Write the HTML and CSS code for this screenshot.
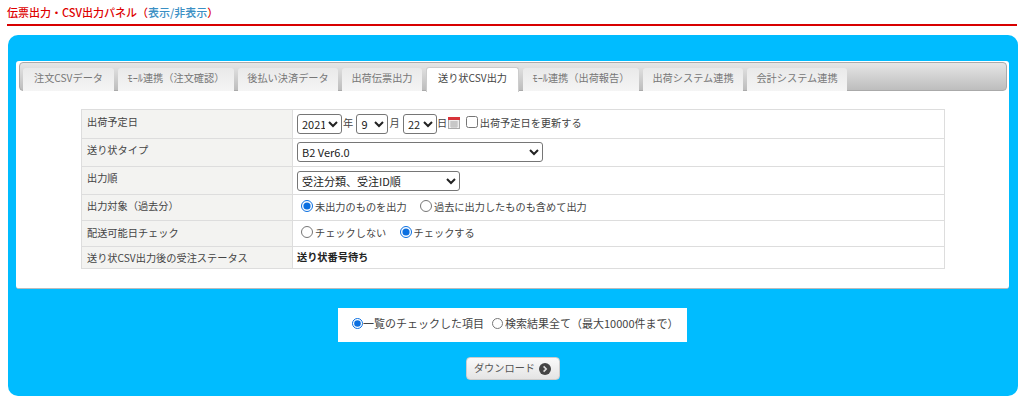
FILE: index.html
```html
<!DOCTYPE html>
<html lang="ja">
<head>
<meta charset="utf-8">
<title>伝票出力・CSV出力パネル</title>
<link rel="stylesheet" href="styles.css">
</head>
<body>
<h2 class="title">伝票出力・CSV出力パネル（<a class="toggle" href="#">表示/非表示</a>）</h2>
<section class="panel">
  <div class="card">
    <ul class="tabs">
      <li class="tab t1">注文CSVデータ</li>
      <li class="tab t2">ﾓｰﾙ連携（注文確認）</li>
      <li class="tab t3">後払い決済データ</li>
      <li class="tab t4">出荷伝票出力</li>
      <li class="tab t5 active">送り状CSV出力</li>
      <li class="tab t6">ﾓｰﾙ連携（出荷報告）</li>
      <li class="tab t7">出荷システム連携</li>
      <li class="tab t8">会計システム連携</li>
    </ul>
    <table class="form">
      <tr class="r1">
        <th>出荷予定日</th>
        <td class="line">
          <select class="sel year"><option>2021</option></select><span class="unit">年</span>
          <select class="sel month"><option>9</option></select><span class="unit">月</span>
          <select class="sel day"><option>22</option></select><span class="unit day-unit">日</span>
          <svg class="cal" width="12" height="12" viewBox="0 0 12 12"><rect x="0.5" y="0.5" width="11" height="11" fill="#eee" stroke="#aaa"/><rect x="0" y="0" width="12" height="3" fill="#d8343a"/><path d="M2 5h8M2 7h8M2 9h8M4 4v7M6 4v7M8 4v7" stroke="#bbb" stroke-width="1"/></svg>
          <label class="opt chk"><input type="checkbox">出荷予定日を更新する</label>
        </td>
      </tr>
      <tr class="r2">
        <th>送り状タイプ</th>
        <td><select class="sel type"><option>B2 Ver6.0</option></select></td>
      </tr>
      <tr class="r3">
        <th>出力順</th>
        <td><select class="sel order"><option>受注分類、受注ID順</option></select></td>
      </tr>
      <tr class="r4">
        <th>出力対象（過去分）</th>
        <td class="line">
          <label class="opt first"><input type="radio" name="a" checked>未出力のものを出力</label>
          <label class="opt"><input type="radio" name="a">過去に出力したものも含めて出力</label>
        </td>
      </tr>
      <tr class="r5">
        <th>配送可能日チェック</th>
        <td class="line">
          <label class="opt"><input type="radio" name="b">チェックしない</label>
          <label class="opt"><input type="radio" name="b" checked>チェックする</label>
        </td>
      </tr>
      <tr class="r6">
        <th>送り状CSV出力後の受注ステータス</th>
        <td><strong>送り状番号待ち</strong></td>
      </tr>
    </table>
  </div>
  <div class="scope">
    <label class="opt"><input type="radio" name="c" checked>一覧のチェックした項目</label>
    <label class="opt"><input type="radio" name="c">検索結果全て（最大10000件まで）</label>
  </div>
  <div class="actions">
    <button class="download" type="button"><span class="download-label">ダウンロード</span>
      <svg width="12" height="12" viewBox="0 0 12 12"><circle cx="6" cy="6" r="6" fill="#444"/><path d="M4.6 3.4 7.2 6 4.6 8.6" fill="none" stroke="#ddd" stroke-width="1.6"/></svg>
    </button>
  </div>
</section>
</body>
</html>
```
FILE: styles.css
```css
* { box-sizing: border-box; }
html, body { margin: 0; padding: 0; background: #fff; }
body {
  height: 403px;
  overflow: hidden;
  font-family: "Noto Sans CJK JP", "Noto Sans", sans-serif;
  font-size: 10.2px;
  color: #333;
}
.title {
  margin: 0 7px 9px;
  height: 26px;
  padding-top: 4px;
  border-bottom: 2px solid #d80000;
  font-size: 11px;
  line-height: 16px;
  font-weight: 500;
  color: #d00;
}
.toggle { color: #3a8fc4; text-decoration: none; }
.panel {
  margin: 0 6px 0 8px;
  height: 361px;
  padding: 26px 9px 0 8px;
  background: #00bcff;
  border-radius: 10px;
}
.card {
  height: 228px;
  background: #fff;
  border-radius: 3px;
  border-bottom: 1px solid #bbb;
  padding: 1px 2px 0 3px;
}
.tabs {
  list-style: none;
  margin: 0;
  height: 29px;
  padding: 5px 0 0 3px;
  display: flex;
  gap: 4px;
  border: 1px solid #aaa;
  border-radius: 4px;
  background: linear-gradient(#e6e6e6, #bdbdbd);
}
.tab {
  height: 23px;
  line-height: 19px;
  text-align: center;
  color: #777;
  background: linear-gradient(#e9e9e9, #f5f5f5);
  border-radius: 3px 3px 0 0;
  white-space: nowrap;
}
.t1 { width: 91px; }
.t2 { width: 116px; }
.t3 { width: 100px; }
.t4 { width: 80px; }
.t5 { width: 93px; }
.t6 { width: 116px; }
.t7 { width: 100px; }
.t8 { width: 100px; }
.tab.active {
  height: 25px;
  margin-top: -1px;
  background: #fff;
  color: #444;
  border: 1px solid #ccc;
  border-bottom: 0;
}
.form {
  width: 864px;
  margin: 18px 0 0 62px;
  border-collapse: collapse;
  table-layout: fixed;
}
.form th, .form td {
  border: 1px solid #ddd;
  padding: 0 4px;
  text-align: left;
  font-weight: 400;
  color: #444;
}
.form th { width: 211px; background: #f3f3f1; padding-left: 5px; }
.form td strong { font-weight: 700; color: #222; }
.r1 { height: 29px; }
.r2, .r3 { height: 28px; }
.r4, .r5 { height: 26px; }
.r6 { height: 22px; }
.r1 th, .r2 th, .r3 th { padding-bottom: 6px; }
.r4 th { padding-bottom: 4px; }
.r5 th { padding-bottom: 2px; }
.r4 td, .r5 td, .r6 td { padding-bottom: 2px; }
.r2 td { padding-bottom: 2px; }
.line { white-space: nowrap; }
.sel {
  height: 20px;
  font: inherit;
  font-size: 11px;
  color: #222;
  background: #fff;
  border: 1px solid #767676;
  border-radius: 3px;
  vertical-align: middle;
  padding: 0;
}
.year { width: 45px; }
.month { width: 32px; }
.day { width: 34px; }
.type { width: 246px; }
.order { width: 163px; }
.unit { margin: 0 1px; }
.day-unit { margin: 0 -1px 0 0; }
.cal { vertical-align: -2px; }
.opt { margin-right: 7px; }
.opt input { margin: 0 2px 0 4px; width: 12px; height: 12px; vertical-align: -1px; accent-color: #0b6fe0; }
.chk input { margin: 0 2px 0 3px; }
.scope {
  width: 349px;
  height: 34px;
  margin: 19px auto 0;
  padding: 0 0 4px 10px;
  background: #fff;
  display: flex;
  align-items: center;
  color: #444;
  font-size: 11px;
}
.scope .opt { margin-right: 4px; }
.scope .opt input { width: 11px; height: 11px; margin-right: 0; }
.scope .opt + .opt input { margin-right: 2px; }
.actions { margin-top: 15px; text-align: center; }
.download {
  width: 94px;
  height: 23px;
  padding: 0;
  font: inherit;
  color: #555;
  background: linear-gradient(#fafafa, #e4e4e4);
  border: 1px solid #ccc;
  border-radius: 4px;
  display: inline-flex;
  align-items: center;
  justify-content: center;
  gap: 4px;
}
.download-label { margin-bottom: 2px; }
```
